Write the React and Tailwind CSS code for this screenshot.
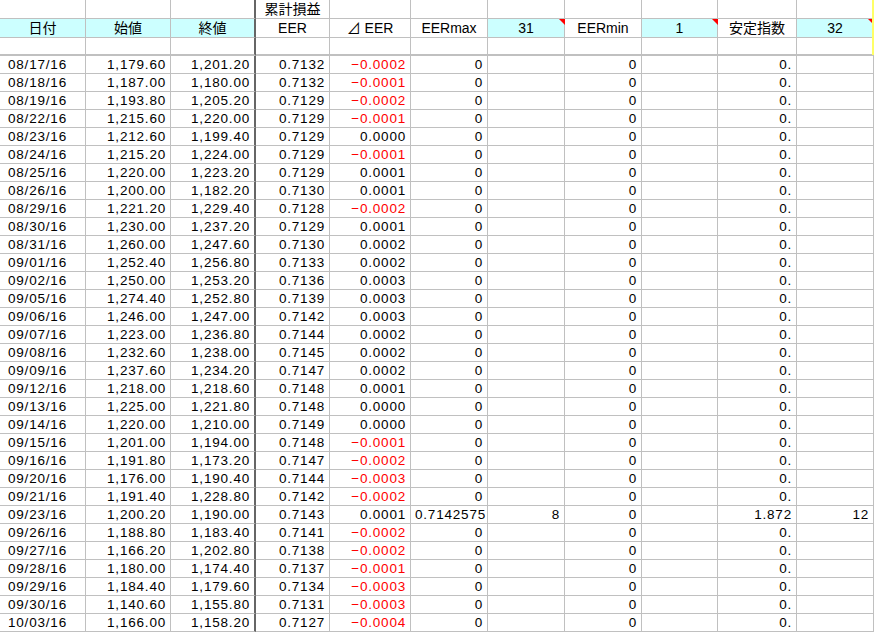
const rows = `08/17/16,1179.60,1201.20,0.7132,-0.0002
08/18/16,1187.00,1180.00,0.7132,-0.0001
08/19/16,1193.80,1205.20,0.7129,-0.0002
08/22/16,1215.60,1220.00,0.7129,-0.0001
08/23/16,1212.60,1199.40,0.7129,0.0000
08/24/16,1215.20,1224.00,0.7129,-0.0001
08/25/16,1220.00,1223.20,0.7129,0.0001
08/26/16,1200.00,1182.20,0.7130,0.0001
08/29/16,1221.20,1229.40,0.7128,-0.0002
08/30/16,1230.00,1237.20,0.7129,0.0001
08/31/16,1260.00,1247.60,0.7130,0.0002
09/01/16,1252.40,1256.80,0.7133,0.0002
09/02/16,1250.00,1253.20,0.7136,0.0003
09/05/16,1274.40,1252.80,0.7139,0.0003
09/06/16,1246.00,1247.00,0.7142,0.0003
09/07/16,1223.00,1236.80,0.7144,0.0002
09/08/16,1232.60,1238.00,0.7145,0.0002
09/09/16,1237.60,1234.20,0.7147,0.0002
09/12/16,1218.00,1218.60,0.7148,0.0001
09/13/16,1225.00,1221.80,0.7148,0.0000
09/14/16,1220.00,1210.00,0.7149,0.0000
09/15/16,1201.00,1194.00,0.7148,-0.0001
09/16/16,1191.80,1173.20,0.7147,-0.0002
09/20/16,1176.00,1190.40,0.7144,-0.0003
09/21/16,1191.40,1228.80,0.7142,-0.0002
09/23/16,1200.20,1190.00,0.7143,0.0001
09/26/16,1188.80,1183.40,0.7141,-0.0002
09/27/16,1166.20,1202.80,0.7138,-0.0002
09/28/16,1180.00,1174.40,0.7137,-0.0001
09/29/16,1184.40,1179.60,0.7134,-0.0003
09/30/16,1140.60,1155.80,0.7131,-0.0003
10/03/16,1166.00,1158.20,0.7127,-0.0004`.split("\n").map(l => l.split(","));

const fmt = v => Number(v).toLocaleString("en-US", { minimumFractionDigits: 2, maximumFractionDigits: 2 });
const widths = [86, 85, 85, 74, 81, 77, 77, 77, 76, 79, 77];
const grid = { gridTemplateColumns: widths.map(w => w + "px").join(" ") };

function Cell({ children, cls = "", i, h = "h-[18px] leading-[18px]" }) {
  return (
    <div className={`${h} border-b border-r ${i === 2 ? "border-r-[#666] border-r-2" : "border-r-[#c0c0c0]"} border-b-[#c0c0c0] px-[4px] whitespace-nowrap overflow-hidden ${cls}`}>
      {children}
    </div>
  );
}

function Flag() {
  return <div className="absolute top-0 right-0 w-0 h-0 border-t-[6px] border-t-[#ff0000] border-l-[6px] border-l-transparent" />;
}

export default function App() {
  const hdr2 = ["日付", "始値", "終値", "EER", "⊿ EER", "EERmax", "31", "EERmin", "1", "安定指数", "32"];
  const cyan = [0, 1, 2, 6, 8, 10];
  return (
    <div className="w-[874px] h-[634px] overflow-hidden bg-white text-[13.5px] text-black relative" style={{ fontFamily: '"Liberation Sans","Noto Sans CJK JP",sans-serif' }}>
      <div className="grid" style={grid}>
        {widths.map((_, i) => <Cell key={i} i={i} h="h-[19px] leading-[19px]" cls="text-center text-[14px]">{i === 3 ? "累計損益" : ""}</Cell>)}
        {hdr2.map((h, i) => (
          <div key={i} className={`relative ${cyan.includes(i) ? "bg-[#ccffff]" : ""}`}>
            <Cell i={i} h="h-[19px] leading-[19px]" cls="text-center text-[14px]">{h}</Cell>
            {(i === 6 || i === 8 || i === 10) && <Flag />}
          </div>
        ))}
        {widths.map((_, i) => <Cell key={i} i={i} h="h-[18px]" cls="border-b-[#666] border-b-2">{""}</Cell>)}
        {rows.map((r, k) => {
          const sp = r[0] === "09/23/16";
          const neg = r[4].startsWith("-");
          const vals = [r[0], fmt(r[1]), fmt(r[2]), r[3], neg ? "−" + r[4].slice(1) : r[4],
            sp ? "0.7142575" : "0", sp ? "8" : "", "0", "", sp ? "1.872" : "0.", sp ? "12" : ""];
          return vals.map((v, i) => (
            <Cell key={k + "-" + i} i={i} cls={`${i === 0 ? "text-left pl-[8px]" : "text-right"} ${i === 4 && neg ? "text-[#ff0000]" : ""} tracking-[0.8px]`}>{v}</Cell>
          ));
        })}
      </div>
      <div className="absolute top-0 right-0 w-[2px] h-[55px] bg-[#ffff66]" />
    </div>
  );
}
